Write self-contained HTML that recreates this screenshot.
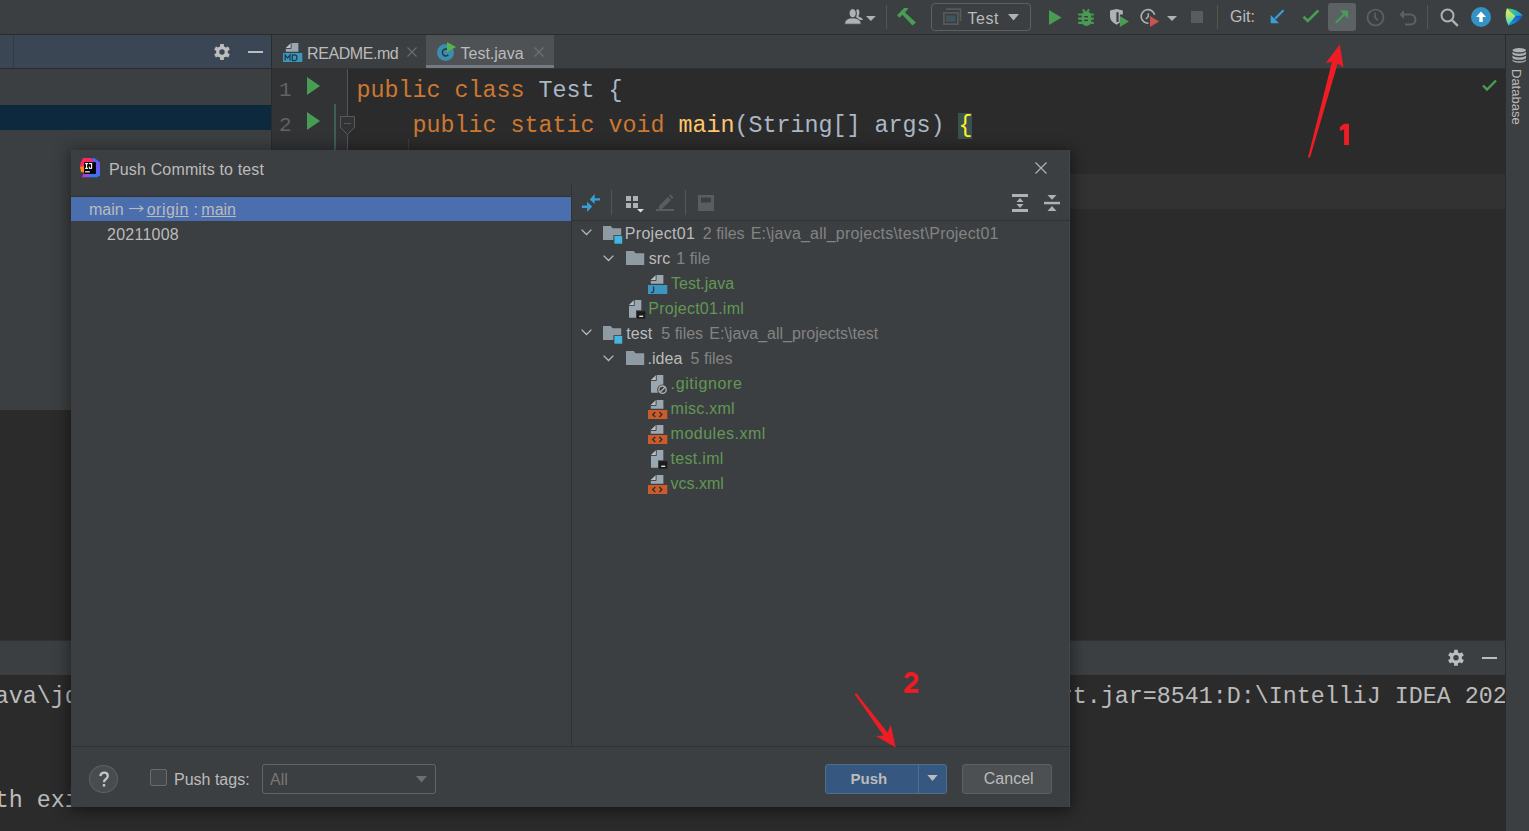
<!DOCTYPE html>
<html><head><meta charset="utf-8">
<style>
*{margin:0;padding:0;box-sizing:border-box}
html,body{width:1529px;height:831px;overflow:hidden;background:#3C3F41;font-family:"Liberation Sans",sans-serif;color:#BBBBBB}
.a{position:absolute}
.t{position:absolute;white-space:nowrap;font-size:16px;line-height:20px}
.mono{font-family:"Liberation Mono",monospace}
.code{position:absolute;white-space:pre;font-family:"Liberation Mono",monospace;font-size:23.33px;line-height:35px;color:#A9B7C6}
.g{color:#629755}
.h{color:#838383}
.k{color:#CC7832}
svg{position:absolute;overflow:visible}
</style></head><body>

<!-- ================= BACKGROUNDS ================= -->
<div class="a" style="left:0;top:0;width:1529px;height:34px;background:#3C3F41"></div>
<div class="a" style="left:0;top:34px;width:1529px;height:1px;background:#2B2B2B"></div>
<!-- left panel -->
<div class="a" style="left:0;top:35px;width:271px;height:33px;background:#3B4654"></div>
<div class="a" style="left:13px;top:35px;width:1px;height:33px;background:#323A44"></div>
<div class="a" style="left:0;top:68px;width:271px;height:1px;background:#2B2B2B"></div>
<div class="a" style="left:0;top:69px;width:271px;height:341px;background:#3C3F41"></div>
<div class="a" style="left:0;top:105px;width:271px;height:25px;background:#0D293E"></div>
<div class="a" style="left:0;top:410px;width:271px;height:230px;background:#2B2B2B"></div>
<div class="a" style="left:271px;top:35px;width:1px;height:605px;background:#2B2B2B"></div>
<!-- tabs -->
<div class="a" style="left:272px;top:35px;width:1233px;height:33px;background:#3C3F41"></div>
<div class="a" style="left:426px;top:35px;width:128px;height:33px;background:#4E5254"></div>
<div class="a" style="left:426px;top:65px;width:128px;height:3px;background:#747A80"></div>
<div class="a" style="left:272px;top:68px;width:1233px;height:1px;background:#323232"></div>
<!-- editor -->
<div class="a" style="left:272px;top:69px;width:76px;height:571px;background:#313335"></div>
<div class="a" style="left:348px;top:69px;width:1157px;height:571px;background:#2B2B2B"></div>
<div class="a" style="left:348px;top:174px;width:1157px;height:35px;background:#323232"></div>
<!-- right strip -->
<div class="a" style="left:1505px;top:35px;width:1px;height:796px;background:#2B2B2B"></div>
<div class="a" style="left:1506px;top:35px;width:23px;height:796px;background:#3C3F41"></div>
<!-- bottom console -->
<div class="a" style="left:0;top:640px;width:1505px;height:1px;background:#323232"></div>
<div class="a" style="left:0;top:641px;width:1505px;height:34px;background:#3C3F41"></div>
<div class="a" style="left:0;top:675px;width:1505px;height:156px;background:#2B2B2B"></div>

<!-- ================= TOOLBAR ================= -->
<!-- person icon -->
<svg style="left:0;top:0" width="1529" height="40" viewBox="0 0 1529 40">
<path d="M856.2 11C856.2 9.8 857 9.3 857.8 9.3C858.9 9.3 859.4 10.6 859.4 12.5C859.4 14.2 858.8 15.4 858.2 16.2L861.5 18.1C862.4 18.7 862.9 19.3 862.9 20H860L856.3 17.6Z" fill="#AFB1B3"/>
<ellipse cx="852.7" cy="13.3" rx="3.6" ry="4.6" fill="#AFB1B3" stroke="#3C3F41" stroke-width="1"/>
<path d="M844.6 24.2C844.6 20.6 847.2 18.6 850.6 18H854.8C858.2 18.6 861.1 20.6 861.1 24.2Z" fill="#AFB1B3" stroke="#3C3F41" stroke-width="0.8"/>
<path d="M866 16H875.8L870.9 20.9Z" fill="#AFB1B3"/>
</svg>
<div class="a" style="left:886px;top:5px;width:1px;height:24px;background:#515658"></div>
<!-- hammer -->
<svg style="left:0;top:0" width="1529" height="40" viewBox="0 0 1529 40"><path d="M897.1 15.3L904.1 8.1L907.6 7.9L908.2 8.7L905 12.6L916 22.5L912.4 25.6L902.4 14.8L899.4 17.8Z" fill="#499C54"/></svg>
<!-- run config combo -->
<div class="a" style="left:931px;top:3px;width:100px;height:28px;border:1px solid #5E6060;border-radius:4px"></div>
<svg style="left:0;top:0" width="1529" height="40" viewBox="0 0 1529 40">
<path d="M946 9.2H960.5V21" fill="none" stroke="#55595B" stroke-width="1.8"/>
<rect x="943.9" y="12.9" width="14" height="11.2" fill="none" stroke="#55595B" stroke-width="1.8"/>
<rect x="946" y="15.5" width="9.6" height="6.2" fill="#3F545C"/>
</svg>
<div class="t" style="left:967.5px;top:8.5px;letter-spacing:0.5px">Test</div>
<svg style="left:1008px;top:14px" width="11" height="7" viewBox="0 0 11 7"><path d="M0 0h11L5.5 6.5z" fill="#AFB1B3"/></svg>
<!-- run -->
<svg style="left:1049px;top:9.5px" width="13" height="15" viewBox="0 0 13 15"><path d="M0 0l12.5 7.5L0 15z" fill="#499C54"/></svg>
<!-- debug -->
<svg style="left:0;top:0" width="1529" height="40" viewBox="0 0 1529 40">
<path d="M1082.9 9.3L1085 12M1089.1 9.3L1087 12" stroke="#499C54" stroke-width="2"/>
<path d="M1081.8 15.5C1081.8 12.8 1083.6 11.4 1086.45 11.4S1091.1 12.8 1091.1 15.5V21.5C1091.1 24.2 1089 25.9 1086.45 25.9S1081.8 24.2 1081.8 21.5Z" fill="#499C54"/>
<path d="M1078.2 14.5H1082.5M1090.5 14.5H1093.7M1078.2 18.7H1082.5M1090.5 18.7H1093.7M1078.2 22.8H1082.5M1090.5 22.8H1093.7" stroke="#499C54" stroke-width="2.2"/>
<rect x="1084.1" y="16" width="3.9" height="1.4" fill="#3C3F41"/><rect x="1084.1" y="19.7" width="3.9" height="1.4" fill="#3C3F41"/>
</svg>
<!-- coverage -->
<svg style="left:0;top:0" width="1529" height="40" viewBox="0 0 1529 40">
<path d="M1110 10.5L1116.5 9.1L1122.8 10.5V14.6H1119.9V22.5L1116.5 24.7C1112.5 22.5 1110 20 1110 16Z" fill="#AFB1B3"/>
<path d="M1116.4 12.2H1118.6V22H1116.4Z" fill="#3C3F41"/>
<path d="M1119.9 15.9L1128.9 21.4L1119.9 26.9Z" fill="#499C54"/>
</svg>
<!-- profiler -->
<svg style="left:0;top:0" width="1529" height="40" viewBox="0 0 1529 40">
<path d="M1148.5 23.2A6.8 6.8 0 1 1 1154.6 14.8" fill="none" stroke="#AFB1B3" stroke-width="1.6"/>
<path d="M1148.3 13.2V16.5L1146 19" fill="none" stroke="#AFB1B3" stroke-width="1.5"/>
<path d="M1150 15.9L1159.1 21.4L1150 26.9Z" fill="#C75450"/>
</svg>
<svg style="left:1167px;top:16px" width="10" height="5" viewBox="0 0 10 5"><path d="M0 0h10L5 5z" fill="#AFB1B3"/></svg>
<div class="a" style="left:1191px;top:11px;width:12px;height:12px;background:#595B5D"></div>
<div class="a" style="left:1217px;top:5px;width:1px;height:24px;background:#515658"></div>
<div class="t" style="left:1230px;top:7px">Git:</div>
<!-- update arrow blue -->
<svg style="left:0;top:0" width="1529" height="40" viewBox="0 0 1529 40">
<path d="M1283.5 10.3L1275 18.8" stroke="#389FD6" stroke-width="2.2"/>
<path d="M1270.7 15V23.2H1279.1Z" fill="#389FD6"/>
</svg>
<!-- commit check -->
<svg style="left:0;top:0" width="1529" height="40" viewBox="0 0 1529 40"><path d="M1303.5 16.8L1307.8 21L1318.4 10.5" fill="none" stroke="#499C54" stroke-width="2.6"/></svg>
<!-- push highlighted -->
<div class="a" style="left:1328px;top:3px;width:28px;height:28px;background:#5C6164;border-radius:3px"></div>
<svg style="left:0;top:0" width="1529" height="40" viewBox="0 0 1529 40">
<path d="M1335.8 22.8L1344.3 14.3" stroke="#499C54" stroke-width="2.2"/>
<path d="M1348.2 10.5H1339.8L1348.2 18.8Z" fill="#499C54"/>
</svg>
<!-- history -->
<svg style="left:1366px;top:8px" width="19" height="19" viewBox="0 0 19 19">
<circle cx="9.5" cy="9.5" r="8" fill="none" stroke="#5E6163" stroke-width="1.7"/>
<path d="M9 4.5v5.2l3 2.6" fill="none" stroke="#5E6163" stroke-width="1.6"/>
</svg>
<!-- rollback -->
<svg style="left:1399px;top:8px" width="18" height="18" viewBox="0 0 18 18">
<path d="M3 6.5h8.5a5 5 0 0 1 0 10H6" fill="none" stroke="#5E6163" stroke-width="2"/>
<path d="M0.5 6.5L5 2v9z" fill="#5E6163"/>
</svg>
<div class="a" style="left:1427px;top:5px;width:1px;height:24px;background:#515658"></div>
<!-- search -->
<svg style="left:1440px;top:8px" width="19" height="19" viewBox="0 0 19 19">
<circle cx="7.5" cy="7.5" r="6" fill="none" stroke="#AFB1B3" stroke-width="2"/>
<path d="M11.8 11.8l6 6" stroke="#AFB1B3" stroke-width="2.4"/>
</svg>
<!-- update circle -->
<svg style="left:1471px;top:7px" width="20" height="20" viewBox="0 0 20 20">
<circle cx="10" cy="10" r="10" fill="#3592C4"/>
<path d="M10 4.5L15 10h-3.3v5H8.3v-5H5z" fill="#FFFFFF"/>
</svg>
<!-- toolbox -->
<svg style="left:0;top:0" width="1529" height="40" viewBox="0 0 1529 40">
<defs><linearGradient id="tbA" x1="0" y1="0" x2="0" y2="1"><stop offset="0" stop-color="#F4F04A"/><stop offset=".6" stop-color="#8EE08C"/><stop offset="1" stop-color="#22D6EC"/></linearGradient>
<linearGradient id="tbB" x1="0" y1="0" x2="1" y2="1"><stop offset="0" stop-color="#3DDC84"/><stop offset="1" stop-color="#1A9EE0"/></linearGradient>
<linearGradient id="tbC" x1="1" y1="0" x2="0" y2="1"><stop offset="0" stop-color="#1C4FC8"/><stop offset="1" stop-color="#0BA2E8"/></linearGradient></defs>
<path d="M1506.9 8.2Q1503.8 17 1508.4 25.6L1515.8 16Z" fill="url(#tbA)"/>
<path d="M1506.9 8.2Q1517.5 9 1522.9 15.8L1515.8 16Z" fill="url(#tbB)"/>
<path d="M1522.9 15.8Q1518 23.5 1508.4 25.6L1515.8 16Z" fill="url(#tbC)"/>
</svg>

<!-- left panel header icons -->
<svg style="left:0;top:0" width="1529" height="831" viewBox="0 0 1529 831"><g fill="#BDBDBD"><rect x="220.10" y="44.00" width="3.8" height="16" rx="0.6" transform="rotate(0 222.00 52.00)"/><rect x="220.10" y="44.00" width="3.8" height="16" rx="0.6" transform="rotate(60 222.00 52.00)"/><rect x="220.10" y="44.00" width="3.8" height="16" rx="0.6" transform="rotate(120 222.00 52.00)"/><circle cx="222.00" cy="52.00" r="5.9"/></g><circle cx="222.00" cy="52.00" r="2.7" fill="#3B4654"/></svg>
<div class="a" style="left:247.5px;top:51px;width:15px;height:2px;background:#BDBDBD"></div>

<!-- ================= TABS / EDITOR ================= -->
<svg style="left:282.8px;top:43px" width="20" height="20" viewBox="0 0 20 20"><path d="M8.1 0H15.4V8.7H2.8V5.3Z" fill="#9AA7B0"/><path d="M2.8 5L8.1 0V5Z" fill="#B9C1C6"/><path d="M2.8 5.5H8.1V0" fill="none" stroke="#3C3F41" stroke-width=".9"/>
<rect x="0" y="10" width="19.3" height="9" fill="#3D96BE"/>
<path d="M2.2 17.6V11.9L4.6 15L7 11.9V17.6M9.3 11.9V17.6H11.3C13 17.6 14 16.4 14 14.75S13 11.9 11.3 11.9Z" fill="none" stroke="#1D3947" stroke-width="1.2"/></svg>
<div class="t" style="left:307px;top:43.5px;letter-spacing:-0.42px">README.md</div>
<svg style="left:407px;top:47px" width="10" height="10" viewBox="0 0 10 10"><path d="M0.5 0.5l9 9M9.5 0.5l-9 9" stroke="#6E6E6E" stroke-width="1.1"/></svg>
<svg style="left:437px;top:42px" width="19" height="19" viewBox="0 0 19 19">
<circle cx="8.5" cy="10.5" r="8.5" fill="#3C8DAE"/>
<path d="M11.3 8.2a3.4 3.4 0 1 0 0 4.6" fill="none" stroke="#233845" stroke-width="1.5"/>
<path d="M10 0l9 5-9 5z" fill="#56B648"/>
</svg>
<div class="t" style="left:460.5px;top:43.8px">Test.java</div>
<svg style="left:534px;top:47px" width="10" height="10" viewBox="0 0 10 10"><path d="M0.5 0.5l9 9M9.5 0.5l-9 9" stroke="#6E7275" stroke-width="1.1"/></svg>

<!-- gutter -->
<div class="code" style="left:279px;top:73px;color:#606366;font-size:21px">1</div>
<div class="code" style="left:279px;top:108px;color:#606366;font-size:21px">2</div>
<svg style="left:307px;top:77px" width="13" height="18" viewBox="0 0 13 18"><path d="M0 0l13 9-13 9z" fill="#499C54"/></svg>
<svg style="left:307px;top:112px" width="13" height="18" viewBox="0 0 13 18"><path d="M0 0l13 9-13 9z" fill="#499C54"/></svg>
<div class="a" style="left:347px;top:69px;width:1px;height:47px;background:#555555"></div>
<div class="a" style="left:347px;top:134px;width:1px;height:16px;background:#555555"></div>
<svg style="left:340px;top:116px" width="15" height="19" viewBox="0 0 15 19"><path d="M0.5 0.5h14v11l-7 7-7-7z" fill="#313335" stroke="#5A5A5A"/><path d="M4 7.5h7" stroke="#5A5A5A"/></svg>
<div class="a" style="left:334px;top:104px;width:2px;height:46px;background:#3F5E5A"></div>
<div class="a" style="left:408px;top:139px;width:1px;height:11px;background:#3B3B3B"></div>

<!-- code -->
<div class="code" style="left:356.5px;top:74.3px"><span class="k">public class </span>Test {</div>
<div class="code" style="left:356.5px;top:109.3px">    <span class="k">public static void </span><span style="color:#FFC66D">main</span>(String[] args) <span style="color:#FFEF28;background:#3B514D">{</span></div>
<!-- inspection check -->
<svg style="left:1482px;top:79px" width="15" height="13" viewBox="0 0 15 13"><path d="M1 6.5l4 4 9-9" fill="none" stroke="#499C54" stroke-width="2.4"/></svg>
<!-- database strip -->
<svg style="left:1511.5px;top:48px" width="14.5" height="15" viewBox="0 0 15 17" preserveAspectRatio="none">
<ellipse cx="7.5" cy="2.5" rx="7" ry="2.4" fill="#AFB1B3"/>
<path d="M0.5 4.3c1 1.5 3.5 2.2 7 2.2s6-.7 7-2.2v2.6c-1 1.5-3.5 2.2-7 2.2s-6-.7-7-2.2z" fill="#AFB1B3"/>
<path d="M0.5 8.6c1 1.5 3.5 2.2 7 2.2s6-.7 7-2.2v2.6c-1 1.5-3.5 2.2-7 2.2s-6-.7-7-2.2z" fill="#AFB1B3"/>
<path d="M0.5 12.9c1 1.5 3.5 2.2 7 2.2s6-.7 7-2.2v1.6c-1 1.5-3.5 2.2-7 2.2s-6-.7-7-2.2z" fill="#AFB1B3"/>
</svg>
<div class="t" style="left:1523.5px;top:68.7px;font-size:13px;line-height:16px;transform-origin:0 0;transform:rotate(90deg);color:#BBBBBB">Database</div>

<!-- ================= CONSOLE ================= -->
<svg style="left:0;top:0" width="1529" height="831" viewBox="0 0 1529 831"><g fill="#BDBDBD"><rect x="1454.10" y="649.80" width="3.8" height="16" rx="0.6" transform="rotate(0 1456.00 657.80)"/><rect x="1454.10" y="649.80" width="3.8" height="16" rx="0.6" transform="rotate(60 1456.00 657.80)"/><rect x="1454.10" y="649.80" width="3.8" height="16" rx="0.6" transform="rotate(120 1456.00 657.80)"/><circle cx="1456.00" cy="657.80" r="5.9"/></g><circle cx="1456.00" cy="657.80" r="2.7" fill="#3C3F41"/></svg>
<div class="a" style="left:1481.5px;top:657px;width:15px;height:2px;background:#BDBDBD"></div>
<div class="a" style="left:0;top:675px;width:1505px;height:156px;overflow:hidden">
<div class="code" style="left:-5.3px;top:5.3px;color:#BBBBBB">ava\jdk1.8.0_301\bin\java.exe</div>
<div class="code" style="left:1058.7px;top:5.3px;color:#BBBBBB">rt.jar=8541:D:\IntelliJ IDEA 2021.2.1\bin</div>
<div class="code" style="left:-5.3px;top:109px;color:#BBBBBB">th exit</div>
</div>

<!-- ================= DIALOG ================= -->
<div class="a" style="left:71px;top:150px;width:999px;height:657px;background:#3C3F41;box-shadow:0 2px 14px 2px rgba(0,0,0,0.45),inset -1px 0 0 #45484A"></div>
<!-- IJ logo -->
<svg style="left:0;top:0" width="1529" height="831" viewBox="0 0 1529 831">
<defs><linearGradient id="ijB" x1="0" y1="0" x2="0" y2="1"><stop offset="0" stop-color="#3F6BF5"/><stop offset=".45" stop-color="#7A4FF0"/><stop offset="1" stop-color="#2D7BF4"/></linearGradient></defs>
<path d="M92 158.5L94.5 158L100 162.5V175.5L97 177.2H89V162.2Z" fill="url(#ijB)"/>
<path d="M83 158H91L93 160.5V162.2H84.2V167H80L80.5 163Z" fill="#F72A5F"/>
<path d="M80 167L84.2 166V172.5L81 172Z" fill="#FB8A1A"/>
<path d="M82 177.3L84.2 172V173.9H89V177.2Z" fill="#B03FD9"/>
<rect x="84.2" y="162.2" width="11.7" height="11.7" fill="#000000"/>
<path d="M85.1 163H88V164.2H87.1V167.8H88V169H85.1V167.8H86V164.2H85.1Z" fill="#F2F2F2"/>
<path d="M88.8 163H92.2V168C92.2 168.7 91.8 169 91 169H89.8C89.2 169 88.8 168.6 88.8 168V166.5H89.9V167.8H91V164.2H88.8Z" fill="#F2F2F2"/>
<rect x="85.1" y="171.1" width="4.7" height="1.4" fill="#D8D8D8"/>
</svg>
<div class="t" style="left:109px;top:160px;letter-spacing:0.15px">Push Commits to test</div>
<svg style="left:1035px;top:162px" width="12" height="12" viewBox="0 0 12 12"><path d="M0.5 0.5l11 11M11.5 0.5l-11 11" stroke="#AFB1B3" stroke-width="1.2"/></svg>

<!-- left list -->
<div class="a" style="left:71px;top:196px;width:500px;height:1px;background:#323232"></div>
<div class="a" style="left:71px;top:197px;width:500px;height:24px;background:#4B6EAF"></div>
<div class="t" style="left:89px;top:199.5px">main</div>
<svg style="left:128.5px;top:205px" width="15" height="7" viewBox="0 0 15 7"><path d="M0 3.5h13.5" stroke="#BBBBBB" stroke-width="1.1"/><path d="M10.5 0.6l3.6 2.9-3.6 2.9" fill="none" stroke="#BBBBBB" stroke-width="1.1"/></svg>
<div class="t" style="left:146.7px;top:199.5px;text-decoration:underline;letter-spacing:0.5px">origin</div>
<div class="t" style="left:193.5px;top:199.5px">:</div>
<div class="t" style="left:201.3px;top:199.5px;text-decoration:underline">main</div>
<div class="t" style="left:107px;top:224.5px;letter-spacing:0.25px">20211008</div>

<div class="a" style="left:571px;top:185px;width:1px;height:561px;background:#323232"></div>
<div class="a" style="left:572px;top:220px;width:498px;height:1px;background:#323232"></div>

<!-- right toolbar -->
<svg style="left:0;top:0" width="1529" height="831" viewBox="0 0 1529 831">
<path d="M589.7 199.4L594.7 193.9V198.2H600.1V200.6H594.7V204.1Z" fill="#389FD6"/>
<path d="M592.2 206.6L587.1 201.7V205.5H581.9V208H587.1V211.9Z" fill="#389FD6"/>
</svg>
<div class="a" style="left:611px;top:190px;width:1px;height:25px;background:#515658"></div>
<svg style="left:625.5px;top:196px" width="19" height="17" viewBox="0 0 19 17">
<rect x="0" y="0" width="5" height="5" fill="#AFB1B3"/><rect x="7" y="0" width="5" height="5" fill="#AFB1B3"/>
<rect x="0" y="7" width="5" height="5" fill="#AFB1B3"/><rect x="7" y="7" width="5" height="5" fill="#AFB1B3"/>
<path d="M11 13h7l-3.5 3.5z" fill="#DDDDDD"/>
</svg>
<svg style="left:656px;top:194px" width="18" height="17" viewBox="0 0 18 17">
<path d="M3 12l9-9 3 3-9 9H3z" fill="#5A5D5F"/><path d="M13 2l1.5-1.5 3 3L16 5z" fill="#5A5D5F"/>
<rect x="0" y="15" width="18" height="2" fill="#5A5D5F"/>
</svg>
<div class="a" style="left:685px;top:190px;width:1px;height:25px;background:#515658"></div>
<svg style="left:698px;top:195px" width="16" height="16" viewBox="0 0 16 16">
<path d="M0 0h16v16H0zM3 2.5v5h10v-5z" fill="#5A5D5F" fill-rule="evenodd"/>
</svg>
<svg style="left:1012px;top:194px" width="16" height="18" viewBox="0 0 16 18">
<rect x="0" y="0" width="16" height="3" fill="#AFB1B3"/><path d="M4.5 8h7L8 4z" fill="#AFB1B3"/><path d="M4.5 10h7L8 14z" fill="#AFB1B3"/><rect x="0" y="15" width="16" height="3" fill="#AFB1B3"/>
</svg>
<svg style="left:1044px;top:195px" width="16" height="16" viewBox="0 0 16 16">
<path d="M3.5 0h9L8 4.7z" fill="#AFB1B3"/><rect x="0" y="6.8" width="16" height="2.5" fill="#AFB1B3"/><path d="M3.5 16h9L8 11z" fill="#AFB1B3"/>
</svg>

<!-- tree -->
<svg style="left:581.0px;top:229.0px" width="11" height="7" viewBox="0 0 11 7"><path d="M0.6 0.6l4.9 4.9 4.9-4.9" fill="none" stroke="#B8BABC" stroke-width="1.3"/></svg>
<svg style="left:602.8px;top:226.2px" width="20" height="18" viewBox="0 0 20 18"><path d="M0 0h7.8l1.7 2.3h8.7v11.8H0z" fill="#8F9BA3"/><rect x="10.4" y="9.2" width="9.6" height="8.7" fill="#3C3F41"/><rect x="11.4" y="10" width="7.8" height="7.7" fill="#40B6E0"/></svg>
<div class="t" style="left:624.8px;top:223.5px;letter-spacing:0.3px">Project01</div>
<div class="t h" style="left:702.8px;top:223.5px;">2 files</div>
<div class="t h" style="left:750.7px;top:223.5px;letter-spacing:0.2px">E:\java_all_projects\test\Project01</div>
<svg style="left:603.4px;top:255.0px" width="11" height="7" viewBox="0 0 11 7"><path d="M0.6 0.6l4.9 4.9 4.9-4.9" fill="none" stroke="#B8BABC" stroke-width="1.3"/></svg>
<svg style="left:625.9px;top:250.9px" width="20" height="18" viewBox="0 0 20 18"><path d="M0 0h7.8l1.7 2.3h8.7v11.8H0z" fill="#8F9BA3"/></svg>
<div class="t" style="left:648.8px;top:248.5px;">src</div>
<div class="t h" style="left:676.3px;top:248.5px;">1 file</div>
<svg style="left:647.9px;top:275.0px" width="20" height="20" viewBox="0 0 20 20"><path d="M8.1 0H15.4V8.7H2.8V5.3Z" fill="#9AA7B0"/><path d="M2.8 5L8.1 0V5Z" fill="#B9C1C6"/><path d="M2.8 5.5H8.1V0" fill="none" stroke="#3C3F41" stroke-width=".9"/><rect x="0" y="10" width="19.3" height="9" fill="#3D96BE"/><path d="M5.6 11.5v4.5c0 1-.5 1.5-1.4 1.5-.5 0-.9-.2-1.1-.5" fill="none" stroke="#1D3947" stroke-width="1.3"/></svg>
<div class="t g" style="left:671.0px;top:273.5px;">Test.java</div>
<svg style="left:628.7px;top:300.0px" width="20" height="20" viewBox="0 0 20 20"><path d="M5.3 0H12.3V17.7H0V5.3Z" fill="#9AA7B0"/><path d="M0 5L5.3 0V5Z" fill="#B9C1C6"/><path d="M0 5.5H5.3V0" fill="none" stroke="#3C3F41" stroke-width=".9"/><rect x="7" y="10.3" width="10.3" height="9.3" fill="#3C3F41"/><rect x="8" y="11.3" width="8.3" height="7.3" fill="#1B1B1B"/><rect x="10.2" y="15.6" width="4" height="1.4" fill="#E0E0E0"/></svg>
<div class="t g" style="left:648.3px;top:298.5px;letter-spacing:0.25px">Project01.iml</div>
<svg style="left:581.0px;top:329.0px" width="11" height="7" viewBox="0 0 11 7"><path d="M0.6 0.6l4.9 4.9 4.9-4.9" fill="none" stroke="#B8BABC" stroke-width="1.3"/></svg>
<svg style="left:602.8px;top:326.2px" width="20" height="18" viewBox="0 0 20 18"><path d="M0 0h7.8l1.7 2.3h8.7v11.8H0z" fill="#8F9BA3"/><rect x="10.4" y="9.2" width="9.6" height="8.7" fill="#3C3F41"/><rect x="11.4" y="10" width="7.8" height="7.7" fill="#40B6E0"/></svg>
<div class="t" style="left:626.3px;top:323.5px;">test</div>
<div class="t h" style="left:661.3px;top:323.5px;">5 files</div>
<div class="t h" style="left:709.3px;top:323.5px;">E:\java_all_projects\test</div>
<svg style="left:603.4px;top:355.0px" width="11" height="7" viewBox="0 0 11 7"><path d="M0.6 0.6l4.9 4.9 4.9-4.9" fill="none" stroke="#B8BABC" stroke-width="1.3"/></svg>
<svg style="left:625.9px;top:350.9px" width="20" height="18" viewBox="0 0 20 18"><path d="M0 0h7.8l1.7 2.3h8.7v11.8H0z" fill="#8F9BA3"/></svg>
<div class="t" style="left:647.6px;top:348.5px;">.idea</div>
<div class="t h" style="left:690.6px;top:348.5px;">5 files</div>
<svg style="left:650.6px;top:375.0px" width="20" height="20" viewBox="0 0 20 20"><path d="M5.3 0H12.3V17.7H0V5.3Z" fill="#9AA7B0"/><path d="M0 5L5.3 0V5Z" fill="#B9C1C6"/><path d="M0 5.5H5.3V0" fill="none" stroke="#3C3F41" stroke-width=".9"/><circle cx="11.5" cy="14.7" r="5.3" fill="#3C3F41"/><circle cx="11.5" cy="14.7" r="3.7" fill="none" stroke="#AFB1B3" stroke-width="1.3"/><path d="M9 17.2l5-5" stroke="#AFB1B3" stroke-width="1.3"/></svg>
<div class="t g" style="left:670.6px;top:373.5px;letter-spacing:0.60px">.gitignore</div>
<svg style="left:647.9px;top:400.0px" width="20" height="20" viewBox="0 0 20 20"><path d="M8.1 0H15.4V8.7H2.8V5.3Z" fill="#9AA7B0"/><path d="M2.8 5L8.1 0V5Z" fill="#B9C1C6"/><path d="M2.8 5.5H8.1V0" fill="none" stroke="#3C3F41" stroke-width=".9"/><rect x="0" y="10" width="19.3" height="9" fill="#CC5B2A"/><path d="M7.3 12l-2.6 2.5 2.6 2.5M11.3 12l2.6 2.5-2.6 2.5" fill="none" stroke="#2E2E2E" stroke-width="1.3"/></svg>
<div class="t g" style="left:670.6px;top:398.5px;letter-spacing:0.25px">misc.xml</div>
<svg style="left:647.9px;top:425.0px" width="20" height="20" viewBox="0 0 20 20"><path d="M8.1 0H15.4V8.7H2.8V5.3Z" fill="#9AA7B0"/><path d="M2.8 5L8.1 0V5Z" fill="#B9C1C6"/><path d="M2.8 5.5H8.1V0" fill="none" stroke="#3C3F41" stroke-width=".9"/><rect x="0" y="10" width="19.3" height="9" fill="#CC5B2A"/><path d="M7.3 12l-2.6 2.5 2.6 2.5M11.3 12l2.6 2.5-2.6 2.5" fill="none" stroke="#2E2E2E" stroke-width="1.3"/></svg>
<div class="t g" style="left:670.6px;top:423.5px;letter-spacing:0.50px">modules.xml</div>
<svg style="left:650.6px;top:450.0px" width="20" height="20" viewBox="0 0 20 20"><path d="M5.3 0H12.3V17.7H0V5.3Z" fill="#9AA7B0"/><path d="M0 5L5.3 0V5Z" fill="#B9C1C6"/><path d="M0 5.5H5.3V0" fill="none" stroke="#3C3F41" stroke-width=".9"/><rect x="7" y="10.3" width="10.3" height="9.3" fill="#3C3F41"/><rect x="8" y="11.3" width="8.3" height="7.3" fill="#1B1B1B"/><rect x="10.2" y="15.6" width="4" height="1.4" fill="#E0E0E0"/></svg>
<div class="t g" style="left:670.6px;top:448.5px;letter-spacing:0.30px">test.iml</div>
<svg style="left:647.9px;top:475.0px" width="20" height="20" viewBox="0 0 20 20"><path d="M8.1 0H15.4V8.7H2.8V5.3Z" fill="#9AA7B0"/><path d="M2.8 5L8.1 0V5Z" fill="#B9C1C6"/><path d="M2.8 5.5H8.1V0" fill="none" stroke="#3C3F41" stroke-width=".9"/><rect x="0" y="10" width="19.3" height="9" fill="#CC5B2A"/><path d="M7.3 12l-2.6 2.5 2.6 2.5M11.3 12l2.6 2.5-2.6 2.5" fill="none" stroke="#2E2E2E" stroke-width="1.3"/></svg>
<div class="t g" style="left:670.6px;top:473.5px;">vcs.xml</div>

<!-- bottom bar -->
<div class="a" style="left:71px;top:746px;width:999px;height:1px;background:#323232"></div>
<div class="a" style="left:89px;top:765px;width:29px;height:28px;border-radius:50%;background:#484C4E;border:1px solid #5E6163"></div>
<svg style="left:0;top:0" width="1529" height="831" viewBox="0 0 1529 831"><path d="M100.4 776.2C100.6 773.8 102.2 772.6 104.2 772.6C106.4 772.6 107.8 774 107.8 775.9C107.8 777.6 106.8 778.4 105.7 779.2C104.6 780 104 780.7 104 782.3" fill="none" stroke="#C4C4C4" stroke-width="2.3"/><rect x="102.8" y="784" width="2.4" height="2.6" fill="#C4C4C4"/></svg>
<div class="a" style="left:150px;top:769px;width:17px;height:17px;border:1px solid #6B6B6B;border-radius:2px;background:#43494A"></div>
<div class="t" style="left:174px;top:770px">Push tags:</div>
<div class="a" style="left:262px;top:764px;width:174px;height:30px;border:1px solid #646464;border-radius:3px"></div>
<div class="t" style="left:270px;top:770px;color:#777777">All</div>
<svg style="left:416px;top:776px" width="11" height="7" viewBox="0 0 11 7"><path d="M0 0h11L5.5 6.5z" fill="#6E6E6E"/></svg>

<div class="a" style="left:825px;top:764px;width:122px;height:30px;border:1px solid #4C708C;border-radius:3px;background:#365880"></div>
<div class="a" style="left:918px;top:765px;width:1px;height:28px;background:#4C708C"></div>
<div class="t" style="left:850.5px;top:768.7px;font-weight:bold;font-size:15px">Push</div>
<svg style="left:927px;top:775px" width="11" height="6.5" viewBox="0 0 11 7"><path d="M0 0h11L5.5 6.5z" fill="#BBBBBB"/></svg>
<div class="a" style="left:962px;top:764px;width:90px;height:30px;border:1px solid #5E6060;border-radius:3px;background:#4C5052"></div>
<div class="t" style="left:983.8px;top:769px">Cancel</div>

<!-- ================= ANNOTATIONS ================= -->
<svg style="left:0;top:0" width="1529" height="831" viewBox="0 0 1529 831">
<path d="M1339.8 44.4 L1343.5 67.6 L1337.7 63.5 L1310 157.8 L1308 157.2 L1331.9 61.9 L1325.7 62.9 Z" fill="#EE1C25"/>
<path d="M895.7 747.6 L875.9 736 L883.5 735.5 L854.6 694.3 L856.2 693.1 L887.5 732.5 L890.8 725 Z" fill="#EE1C25"/>
<path d="M1344.1 123.8 H1349 V144.9 H1344.1 V129.5 L1339.8 130.8 V127 Z" fill="#EE1C25"/>
<path d="M906.3 678 C906.8 675.5 908.8 674 911.5 674 C914.5 674 916.5 675.8 916.5 678.5 C916.5 681.2 914.5 683 911.5 685.2 C908.5 687.5 906.5 689 906.5 690.9" fill="none" stroke="#EE1C25" stroke-width="4"/>
<rect x="904.5" y="688.9" width="14.1" height="4" fill="#EE1C25"/>
</svg>
</body></html>
